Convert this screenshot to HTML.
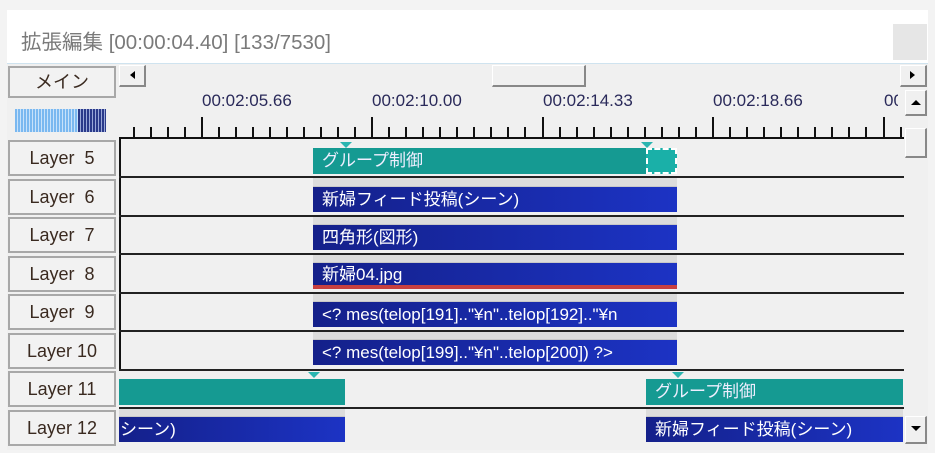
<!DOCTYPE html>
<html><head><meta charset="utf-8"><style>
*{margin:0;padding:0;box-sizing:border-box}
body{width:935px;height:453px;background:#f3f3f3;position:relative;overflow:hidden;font-family:"Liberation Sans","Noto Sans CJK JP",sans-serif}
.a{position:absolute}
.title{left:7px;top:10px;width:921px;height:54px;background:#fff;border-bottom:1px solid #cfe3ef}
.title span{position:absolute;left:14px;top:15px;font-size:20.5px;color:#7a7a7a}
.main{left:7px;top:64px;width:921px;height:386px;background:#f0f0f0}
.lbl{position:absolute;left:8px;width:108px;height:36px;border:2px solid #a8a8a8;background:#f2f2f2;font-size:18px;color:#3a2a20;text-align:center;line-height:32px}
.row{position:absolute;left:119px;width:785px;height:2px;background:#222}
.gray{position:absolute;background:#dcdcdc;border-bottom:1px solid #c8c8c8}
.blue{position:absolute;height:25px;background:linear-gradient(90deg,#14208a,#1c33c4);color:#fff;font-size:17px;line-height:25px;padding-left:9px;white-space:nowrap;overflow:hidden}
.teal{position:absolute;background:#159a92;color:#eef;font-size:17px;line-height:25px;padding-left:9px;white-space:nowrap;overflow:hidden}
.btn{position:absolute;background:#f0f0f0;border:1px solid #fff;border-right:2px solid #888;border-bottom:2px solid #888}
.tri{position:absolute;width:0;height:0;border-left:6px solid transparent;border-right:6px solid transparent;border-top:6px solid #2ab5b0}
.tm{position:absolute;top:91px;font-size:17px;color:#2a2a5a}
</style></head><body>
<div class="a title"><span>拡張編集 [00:00:04.40] [133/7530]</span>
<div class="a" style="left:886px;top:14px;width:34px;height:36px;background:#e6e6e6"></div></div>
<div class="a main"></div>
<div class="lbl" style="top:66px;height:32px;line-height:28px">メイン</div>
<div class="a" style="left:15px;top:109px;width:63px;height:23px;background:repeating-linear-gradient(90deg,#7ab8f0 0 2px,#c8e2fa 2px 3px)"></div>
<div class="a" style="left:78px;top:109px;width:28px;height:23px;background:repeating-linear-gradient(90deg,#2a3a8a 0 2px,#9aa8d8 2px 3px)"></div>
<div class="btn" style="left:119px;top:65px;width:27px;height:22px"><div class="a" style="left:10px;top:5px;border-top:4px solid transparent;border-bottom:4px solid transparent;border-right:5px solid #000"></div></div>
<div class="btn" style="left:492px;top:65px;width:94px;height:22px"></div>
<div class="btn" style="left:900px;top:65px;width:27px;height:22px"><div class="a" style="left:9px;top:5px;border-top:4px solid transparent;border-bottom:4px solid transparent;border-left:5px solid #000"></div></div>
<div class="btn" style="left:905px;top:90px;width:22px;height:26px"><div class="a" style="left:5px;top:9px;border-left:5px solid transparent;border-right:5px solid transparent;border-bottom:5px solid #000"></div></div>
<div class="btn" style="left:905px;top:128px;width:22px;height:30px"></div>
<div class="btn" style="left:905px;top:416px;width:22px;height:28px"><div class="a" style="left:5px;top:9px;border-left:5px solid transparent;border-right:5px solid transparent;border-top:5px solid #000"></div></div>
<div class="tm" style="left:202px">00:02:05.66</div>
<div class="tm" style="left:372px">00:02:10.00</div>
<div class="tm" style="left:543px">00:02:14.33</div>
<div class="tm" style="left:713px">00:02:18.66</div>
<div class="tm" style="left:884px;width:14px;overflow:hidden">00</div>
<svg class="a" style="left:0;top:0" width="935" height="453">
<g stroke="#111" stroke-width="2">
<path d="M134 127V137M151 127V137M168 127V137M185 127V137M202 117V137M219 127V137M236 127V137M253 127V137M270 127V137M287 127V137M304 127V137M321 127V137M338 127V137M355 127V137M372 117V137M389 127V137M406 127V137M423 127V137M440 127V137M457 127V137M474 127V137M491 127V137M508 127V137M525 127V137M543 117V137M560 127V137M577 127V137M594 127V137M611 127V137M628 127V137M645 127V137M662 127V137M679 127V137M696 127V137M713 117V137M730 127V137M747 127V137M764 127V137M781 127V137M798 127V137M815 127V137M832 127V137M849 127V137M866 127V137M884 117V137M901 127V137"/>
<path d="M119 138H904M120 138V369"/>
</g></svg>
<div class="lbl" style="top:140px">Layer&nbsp; 5</div>
<div class="lbl" style="top:179px">Layer&nbsp; 6</div>
<div class="lbl" style="top:217px">Layer&nbsp; 7</div>
<div class="lbl" style="top:256px">Layer&nbsp; 8</div>
<div class="lbl" style="top:294px">Layer&nbsp; 9</div>
<div class="lbl" style="top:333px">Layer 10</div>
<div class="lbl" style="top:371px">Layer 11</div>
<div class="lbl" style="top:410px">Layer 12</div>
<div class="row" style="top:176px"></div>
<div class="row" style="top:215px"></div>
<div class="row" style="top:253px"></div>
<div class="row" style="top:292px"></div>
<div class="row" style="top:330px"></div>
<div class="row" style="top:369px"></div>
<div class="row" style="top:407px"></div>
<div class="tri" style="left:340px;top:142px"></div>
<div class="tri" style="left:641px;top:142px"></div>
<div class="teal" style="left:313px;top:148px;width:333px;height:26px">グループ制御</div>
<div class="a" style="left:646px;top:148px;width:31px;height:26px;background:#1ab0a8;border:2px dashed #fff"></div>
<div class="gray" style="left:313px;top:178px;width:364px;height:9px"></div>
<div class="blue" style="left:313px;top:187px;width:364px">新婦フィード投稿(シーン)</div>
<div class="gray" style="left:313px;top:217px;width:364px;height:8px"></div>
<div class="blue" style="left:313px;top:225px;width:364px">四角形(図形)</div>
<div class="gray" style="left:313px;top:255px;width:364px;height:8px"></div>
<div class="blue" style="left:313px;top:263px;width:364px;height:26px;border-bottom:4px solid #c84040;line-height:24px">新婦04.jpg</div>
<div class="gray" style="left:313px;top:294px;width:364px;height:8px"></div>
<div class="blue" style="left:313px;top:302px;width:364px">&lt;? mes(telop[191].."¥n"..telop[192].."¥n</div>
<div class="gray" style="left:313px;top:332px;width:364px;height:8px"></div>
<div class="blue" style="left:313px;top:340px;width:364px">&lt;? mes(telop[199].."¥n"..telop[200]) ?&gt;</div>
<div class="tri" style="left:308px;top:372px"></div>
<div class="tri" style="left:672px;top:372px"></div>
<div class="teal" style="left:119px;top:379px;width:226px;height:26px"></div>
<div class="teal" style="left:646px;top:379px;width:257px;height:26px">グループ制御</div>
<div class="gray" style="left:119px;top:409px;width:226px;height:8px"></div>
<div class="blue" style="left:119px;top:417px;width:226px;padding-left:1px">シーン)</div>
<div class="gray" style="left:646px;top:409px;width:257px;height:8px"></div>
<div class="blue" style="left:646px;top:417px;width:257px">新婦フィード投稿(シーン)</div>
</body></html>
